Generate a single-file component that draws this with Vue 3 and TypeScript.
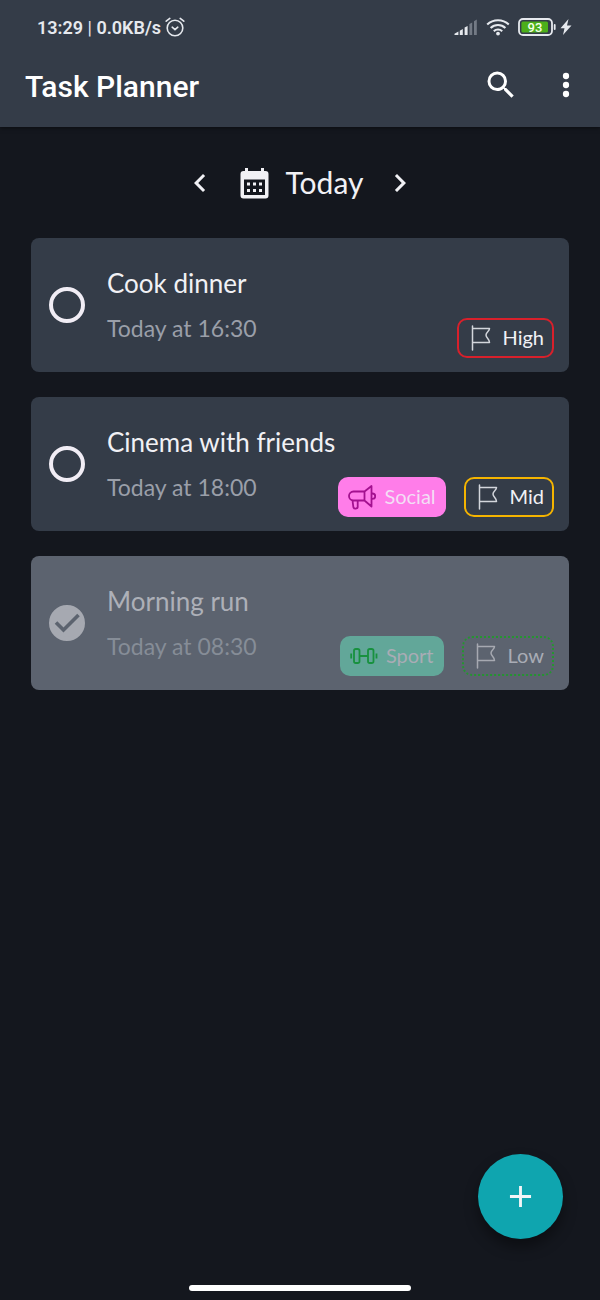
<script setup lang="ts">
import { ref } from 'vue'

interface Priority {
  label: string
  tone: 'high' | 'mid' | 'low'
}

interface Category {
  label: string
  kind: 'social' | 'sport'
}

interface Task {
  id: number
  title: string
  time: string
  done: boolean
  category?: Category
  priority: Priority
}

const tasks = ref<Task[]>([
  { id: 1, title: 'Cook dinner', time: 'Today at 16:30', done: false, priority: { label: 'High', tone: 'high' } },
  {
    id: 2,
    title: 'Cinema with friends',
    time: 'Today at 18:00',
    done: false,
    category: { label: 'Social', kind: 'social' },
    priority: { label: 'Mid', tone: 'mid' },
  },
  {
    id: 3,
    title: 'Morning run',
    time: 'Today at 08:30',
    done: true,
    category: { label: 'Sport', kind: 'sport' },
    priority: { label: 'Low', tone: 'low' },
  },
])
</script>

<template>
  <div class="screen">
    <header class="top">
      <div class="status">
        <span class="status-text">13:29 <span class="bar">|</span> 0.0KB/s</span>
        <svg class="alarm" width="20" height="20" viewBox="0 0 20 20" fill="none" stroke="#e6e9ee" stroke-width="1.6" stroke-linecap="round">
          <circle cx="10" cy="11" r="7.8" />
          <path d="M1.2 4.2 4.8 1.4M18.8 4.2 15.2 1.4M7.2 10.2 10 12.6l2.8-2.4" />
        </svg>
        <div class="status-icons">
          <svg width="24" height="18" viewBox="0 0 24 18">
            <path d="M0.500 17v-1.200L4.400 13.500V17zM5.800 17v-4.200l3-1.700V17zM10.600 17V9.600L13.600 8v9z" fill="#e6e9ee" />
            <path d="M15.400 17V6l2.800-1.600V17zM20 17V3.200l2.800-1.600V17z" fill="#737a85" />
          </svg>
          <svg width="24" height="18" viewBox="0 0 24 18" fill="none" stroke="#e6e9ee" stroke-width="2.1">
            <path d="M1.2 6.6a15.6 15.6 0 0 1 21.6 0M4.6 10a10.6 10.6 0 0 1 14.8 0M7.8 13.2a6 6 0 0 1 8.4 0" />
            <circle cx="12" cy="15.6" r="1.9" fill="#e6e9ee" stroke="none" />
          </svg>
          <span class="power">
            <svg width="38" height="18" viewBox="0 0 38 18">
              <rect x="1" y="1" width="33" height="16" rx="4" fill="none" stroke="#e6e9ee" stroke-width="1.8" />
              <rect x="3.4" y="3.4" width="26.6" height="11.2" rx="1.5" fill="#4caf1a" />
              <rect x="35.8" y="6" width="1.8" height="6" rx="0.9" fill="#e6e9ee" />
              <text x="17" y="13.800" text-anchor="middle" class="battery-text">93</text>
            </svg>
            <svg width="12" height="18" viewBox="0 0 12 18">
              <path d="M8.500 1 .5 10.200h4L3 17 11.500 7.600H7z" fill="#e6e9ee" />
            </svg>
          </span>
        </div>
      </div>
      <div class="appbar">
        <h1>Task Planner</h1>
        <button type="button" class="icon-button" aria-label="Search">
          <svg width="36" height="36" viewBox="0 0 24 24" fill="#fff">
            <path d="M15.5 14h-.79l-.28-.27A6.471 6.471 0 0 0 16 9.5 6.5 6.5 0 1 0 9.5 16c1.61 0 3.09-.59 4.23-1.57l.27.28v.79l5 4.99L20.49 19l-4.99-5zm-6 0C7.01 14 5 11.99 5 9.5S7.01 5 9.5 5 14 7.01 14 9.5 11.99 14 9.5 14z" />
          </svg>
        </button>
        <button type="button" class="icon-button" aria-label="More options">
          <svg width="36" height="36" viewBox="0 0 24 24" fill="#fff">
            <circle cx="12" cy="6" r="2.1" /><circle cx="12" cy="12" r="2.1" /><circle cx="12" cy="18" r="2.1" />
          </svg>
        </button>
      </div>
    </header>

    <main>
      <nav class="day" aria-label="Day">
        <button type="button" class="icon-button" aria-label="Previous day">
          <svg width="36" height="36" viewBox="0 0 24 24" fill="#f1f1f5"><path d="M15.41 7.41 14 6l-6 6 6 6 1.41-1.41L10.83 12z" /></svg>
        </button>
        <button type="button" class="day-picker">
          <svg width="29" height="32" viewBox="0 0 29 32">
            <path fill="#f1f1f5" fill-rule="evenodd" d="M5 1h3v3h13V1h3v3h1.5A3 3 0 0 1 28.500 7v21.500a3 3 0 0 1-3 3h-22a3 3 0 0 1-3-3V7a3 3 0 0 1 3-3H5zM4 12.500v15.500h21V12.500z" />
            <path fill="#f1f1f5" d="M7 15.500h3v3H7zM13 15.500h3v3h-3zM19 15.500h3v3h-3zM7 22h3v3H7zM13 22h3v3h-3zM19 22h3v3h-3z" />
          </svg>
          <span>Today</span>
        </button>
        <button type="button" class="icon-button" aria-label="Next day">
          <svg width="36" height="36" viewBox="0 0 24 24" fill="#f1f1f5"><path d="M10 6 8.59 7.41 13.17 12l-4.58 4.59L10 18l6-6z" /></svg>
        </button>
      </nav>

      <ul class="tasks">
        <li v-for="task in tasks" :key="task.id" class="card" :class="{ done: task.done }">
          <span class="check">
            <input :id="`task-${task.id}`" v-model="task.done" type="checkbox" />
            <svg v-if="task.done" class="tick" width="36" height="36" viewBox="0 0 36 36" fill="none" stroke="#5c636f" stroke-width="3.600">
              <path d="M7 17.500 14.500 25 29.500 10" />
            </svg>
          </span>
          <label class="text" :for="`task-${task.id}`">
            <span class="title">{{ task.title }}</span>
            <span class="time">{{ task.time }}</span>
          </label>
          <div class="tags">
            <span v-if="task.category" class="tag" :class="task.category.kind">
              <svg v-if="task.category.kind === 'social'" width="28" height="26" viewBox="0 0 28 26" fill="none" stroke="#a3118f" stroke-width="1.800" stroke-linejoin="round" stroke-linecap="round">
                <path d="M16.500 7.500H5.500a4.500 4.500 0 0 0 0 9h11zM16.500 7.500 23.500 2v20.500l-7-6M23.500 9.500h1a2.700 2.700 0 0 1 0 5.400h-1M4.500 16.500l.8 6.200a2.200 2.200 0 0 0 4.400-.5v-5.700" />
              </svg>
              <svg v-else width="28" height="26" viewBox="0 0 28 26" fill="none" stroke="#18913f" stroke-width="1.800">
                <rect x="4" y="6" width="5.500" height="14" rx="1.800" />
                <rect x="18" y="6" width="5.500" height="14" rx="1.800" />
                <path d="M9.500 13h8.500M1.200 10.500v5M26.500 10.500v5" />
              </svg>
              <span>{{ task.category.label }}</span>
            </span>
            <span class="tag" :class="task.priority.tone">
              <svg width="28" height="26" viewBox="0 0 28 26" fill="none" :stroke="task.done ? '#a6a9b1' : '#d3d6dc'" stroke-width="1.500" stroke-linejoin="round" stroke-linecap="round">
                <path d="M5.500 1v24M5.500 3.500h17c0 3-3.500 3.500-3.500 6.500s3.500 3.500 3.500 7.500h-17" />
              </svg>
              <span>{{ task.priority.label }}</span>
            </span>
          </div>
        </li>
      </ul>
    </main>

    <button type="button" class="fab" aria-label="Add task">
      <svg width="23" height="23" viewBox="0 0 24 24" fill="none" stroke="#f3f5f7" stroke-width="3"><path d="M12 1v22M1 12h22" /></svg>
    </button>
    <div class="home-bar"></div>
  </div>
</template>

<style>
body {
  margin: 0;
  background: #14171e;
}
</style>

<style scoped>
.screen {
  display: flex;
  flex-direction: column;
  min-height: 100vh;
  box-sizing: border-box;
  background: #14171e;
  color: #f1f1f5;
  font-family: Lato, "Liberation Sans", sans-serif;
}
button {
  border: 0;
  padding: 0;
  background: none;
  color: inherit;
  font: inherit;
  cursor: pointer;
}
svg {
  display: block;
  flex: none;
}
.top {
  background: #343c48;
  padding-bottom: 24px;
  box-shadow: 0 1px 4px rgba(0, 0, 0, 0.5);
  font-family: Roboto, "Liberation Sans", sans-serif;
}
.status {
  display: flex;
  align-items: center;
  height: 54px;
  padding: 0 28px 0 37px;
  color: #e6e9ee;
  font-size: 18px;
  font-weight: 600;
}
.bar {
  font-weight: 400;
}
.alarm {
  margin-left: 4px;
}
.status-icons {
  display: flex;
  align-items: center;
  gap: 8px;
  margin-left: auto;
}
.power {
  display: flex;
  gap: 4px;
}
.battery-text {
  fill: #f4ffe8;
  font-size: 13px;
  font-weight: 500;
}
.appbar {
  display: flex;
  align-items: center;
  height: 49px;
  padding: 12px 16px 0 25px;
  box-sizing: border-box;
}
h1 {
  flex: 1;
  margin: 0;
  padding-top: 4px;
  color: #fff;
  font-size: 30px;
  line-height: 40px;
  font-weight: 500;
}
.appbar .icon-button + .icon-button {
  margin-left: 29px;
}
main {
  flex: 1;
  padding: 38px 31px 0;
}
.day {
  display: flex;
  align-items: center;
  justify-content: center;
  height: 36px;
}
.day-picker {
  display: flex;
  align-items: center;
  gap: 17px;
  margin: 0 19px 0 22px;
  font-size: 30px;
  line-height: 34px;
}
.day-picker span {
  padding-bottom: 2px;
}
.tasks {
  display: grid;
  gap: 25px;
  margin: 37px 0 0;
  padding: 0;
  list-style: none;
}
.card {
  display: flex;
  align-items: center;
  height: 134px;
  padding: 0 15px 0 18px;
  box-sizing: border-box;
  border-radius: 8px;
  background: #343c48;
}
.card.done {
  background: #5c636f;
}
.check {
  display: grid;
  flex: none;
}
.check > * {
  grid-area: 1 / 1;
}
.check input {
  appearance: none;
  width: 36px;
  height: 36px;
  margin: 0;
  box-sizing: border-box;
  border: 4px solid #f1edf5;
  border-radius: 50%;
}
.done .check input {
  border-color: #a6a9b1;
  background: #a6a9b1;
}
.tick {
  pointer-events: none;
}
.text {
  display: flex;
  flex: none;
  flex-direction: column;
  gap: 13px;
  margin-left: 22px;
  padding-top: 1px;
  white-space: nowrap;
}
.title {
  font-size: 26px;
  line-height: 32px;
}
.time {
  color: #9a9fa9;
  font-size: 23px;
  line-height: 32px;
}
.done .title {
  color: #adb0b8;
}
.done .time {
  color: #868d97;
}
.tags {
  display: flex;
  flex: 1;
  align-self: flex-end;
  justify-content: flex-end;
  gap: 18px;
  min-width: 0;
  margin: 0 0 14px -24px;
}
.tag {
  display: flex;
  align-items: center;
  gap: 8px;
  height: 40px;
  padding: 0 8px;
  box-sizing: border-box;
  border: 2px solid transparent;
  border-radius: 10px;
  font-size: 20px;
  line-height: 24px;
}
.tag span {
  padding-bottom: 2px;
}
.high {
  border-color: #d8202b;
}
.mid {
  border-color: #f5b400;
}
.low {
  border: 2px dotted #259431;
}
.social {
  background: #ff7de9;
  color: #f3def5;
}
.sport {
  background: #62a799;
}
.done .tag {
  color: #a9acb5;
}
.fab {
  position: fixed;
  right: 37px;
  bottom: 61px;
  display: grid;
  place-items: center;
  width: 85px;
  height: 85px;
  border-radius: 50%;
  background: #0fa5af;
  box-shadow: 0 8px 14px rgba(0, 0, 0, 0.4);
}
.home-bar {
  width: 37%;
  height: 6px;
  margin: 0 auto 9px;
  border-radius: 3px;
  background: #fff;
}
</style>
